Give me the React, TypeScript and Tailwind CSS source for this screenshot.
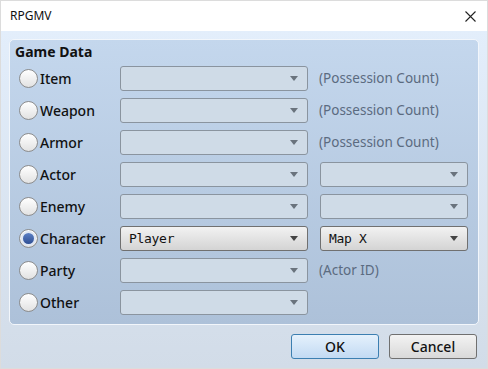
import React from 'react';

type Row = {
  label: string;
  value?: string;
  note?: string;
  second?: boolean;
  secondValue?: string;
  checked?: boolean;
};

const rows: Row[] = [
  { label: 'Item', note: '(Possession Count)' },
  { label: 'Weapon', note: '(Possession Count)' },
  { label: 'Armor', note: '(Possession Count)' },
  { label: 'Actor', second: true },
  { label: 'Enemy', second: true },
  { label: 'Character', value: 'Player', second: true, secondValue: 'Map X', checked: true },
  { label: 'Party', note: '(Actor ID)' },
  { label: 'Other' },
];

function Radio({ checked }: { checked?: boolean }) {
  return (
    <div className="w-[19px] h-[19px] rounded-full border border-[#8c8c8c] bg-gradient-to-b from-[#ffffff] to-[#e2e2e2] flex items-center justify-center shrink-0">
      {checked && (
        <div className="w-[15px] h-[15px] rounded-full bg-[#dfe7f3] flex items-center justify-center">
          <div className="w-[11px] h-[11px] rounded-full bg-gradient-to-b from-[#5d80c4] to-[#2f4f94]" />
        </div>
      )}
    </div>
  );
}

function Combo({ width, value }: { width: string; value?: string }) {
  const active = value !== undefined;
  return (
    <div
      className={`${width} h-[25px] rounded-[3px] border flex items-center justify-between pl-[8px] pr-[9px] ${
        active
          ? 'border-[#707070] bg-gradient-to-b from-[#f2f2f2] to-[#d4d4d4]'
          : 'border-[#8a949f] bg-[#cfdbe7]'
      }`}
    >
      <span className="text-[13px] text-[#111] font-['DejaVu_Sans_Mono',monospace] tracking-[-0.3px]">{value}</span>
      <svg width="8" height="5" viewBox="0 0 8 5">
        <path d="M0 0H8L4 5Z" fill={active ? '#444' : '#6a737d'} />
      </svg>
    </div>
  );
}

export default function App() {
  return (
    <div className="w-[488px] h-[369px] flex flex-col border border-[#dcdcdc] font-['Noto_Sans',sans-serif] overflow-hidden">
      <div className="h-[30px] bg-white flex items-center justify-between pl-[9px] pr-[11px] shrink-0">
        <span className="text-[12px] text-[#111]">RPGMV</span>
        <svg width="11" height="11" viewBox="0 0 11 11">
          <path d="M0.5 0.5L10.5 10.5M10.5 0.5L0.5 10.5" stroke="#222" strokeWidth="1.1" />
        </svg>
      </div>
      <div className="flex-1 bg-gradient-to-b from-[#e3eefb] to-[#d2dce8] flex flex-col pt-[8px] px-[8px]">
        <div className="h-[286px] rounded-[5px] border border-[#f2f6fb] bg-gradient-to-b from-[#c4d7ed] to-[#adc1d9] pl-[9px] pr-[9px] pt-[2px]">
          <div className="h-[20px] text-[14px] font-bold text-[#111] leading-[20px] -ml-[4px]">Game Data</div>
          <div className="flex flex-col gap-[7px] mt-[4px]">
            {rows.map((r) => (
              <div key={r.label} className="flex items-center h-[25px]">
                <div className="w-[101px] flex items-center gap-[2px]">
                  <Radio checked={r.checked} />
                  <span className="text-[14px] text-[#111] font-medium">{r.label}</span>
                </div>
                <Combo width="w-[188px]" value={r.value} />
                {r.second && (
                  <div className="ml-[12px]">
                    <Combo width="w-[148px]" value={r.secondValue} />
                  </div>
                )}
                {r.note && (
                  <span className="ml-[11px] text-[13.5px] text-[#5b6b80]">{r.note}</span>
                )}
              </div>
            ))}
          </div>
        </div>
        <div className="flex justify-end gap-[10px] mt-[9px] pr-[2px]">
          <button className="w-[88px] h-[25px] rounded-[3px] border border-[#3c7fb1] bg-gradient-to-b from-[#e5f1fc] to-[#c2daf3] text-[14px] font-medium text-[#111]">
            OK
          </button>
          <button className="w-[88px] h-[25px] rounded-[3px] border border-[#707070] bg-gradient-to-b from-[#f3f3f3] to-[#d9d9d9] text-[14px] font-medium text-[#111]">
            Cancel
          </button>
        </div>
      </div>
    </div>
  );
}
